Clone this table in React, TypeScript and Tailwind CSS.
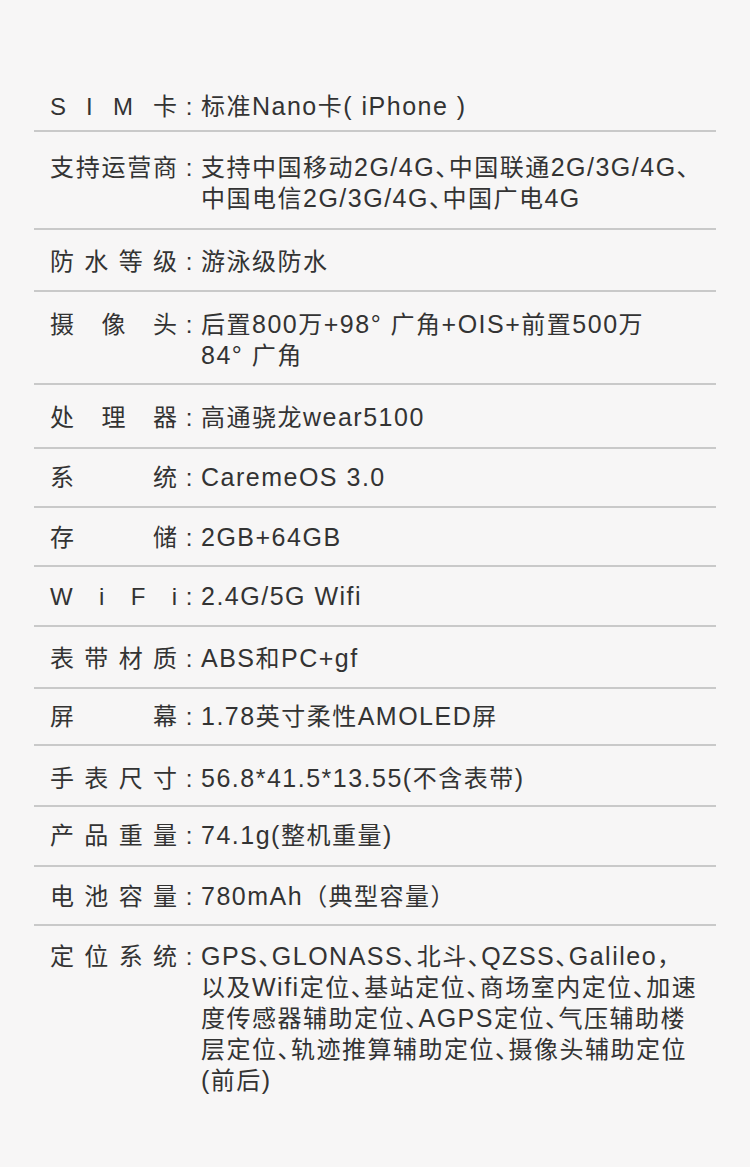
import React from 'react';

interface SpecRow {
  label: string;
  lines: string[];
  pad: string;
  halt?: boolean;
}

const specs: SpecRow[] = [
  { label: 'SIM卡', lines: ['标准Nano卡( iPhone )'], pad: 'pt-0 pb-[8px]' },
  {
    label: '支持运营商',
    lines: ['支持中国移动2G/4G、中国联通2G/3G/4G、', '中国电信2G/3G/4G、中国广电4G'],
    pad: 'pt-[20px] pb-[14px]',
    halt: true,
  },
  { label: '防水等级', lines: ['游泳级防水'], pad: 'pt-[16px] pb-[13px]' },
  { label: '摄像头', lines: ['后置800万+98° 广角+OIS+前置500万', '84° 广角'], pad: 'pt-[17px] pb-[12px]' },
  { label: '处理器', lines: ['高通骁龙wear5100'], pad: 'pt-[17px] pb-[14px]' },
  { label: '系统', lines: ['CaremeOS 3.0'], pad: 'pt-[13px] pb-[13px]' },
  { label: '存储', lines: ['2GB+64GB'], pad: 'pt-[14px] pb-[12px]' },
  { label: 'WiFi', lines: ['2.4G/5G Wifi'], pad: 'pt-[14px] pb-[13px]' },
  { label: '表带材质', lines: ['ABS和PC+gf'], pad: 'pt-[16px] pb-[13px]' },
  { label: '屏幕', lines: ['1.78英寸柔性AMOLED屏'], pad: 'pt-[12px] pb-[12px]' },
  { label: '手表尺寸', lines: ['56.8*41.5*13.55(不含表带)'], pad: 'pt-[17px] pb-[11px]' },
  { label: '产品重量', lines: ['74.1g(整机重量)'], pad: 'pt-[13px] pb-[14px]' },
  { label: '电池容量', lines: ['780mAh（典型容量）'], pad: 'pt-[14px] pb-[12px]' },
  {
    label: '定位系统',
    lines: [
      'GPS、GLONASS、北斗、QZSS、Galileo，',
      '以及Wifi定位、基站定位、商场室内定位、加速',
      '度传感器辅助定位、AGPS定位、气压辅助楼',
      '层定位、轨迹推算辅助定位、摄像头辅助定位',
      '(前后)',
    ],
    pad: 'pt-[15px] pb-[20px]',
    halt: true,
  },
];

// latin runs are set a touch larger than the chinese ones
const Line = ({ text }: { text: string }) => {
  const parts = text.split(/([\u3000-\u303f\u4e00-\u9fff\uff00-\uffef]+)/).filter(Boolean);
  return (
    <div>
      {parts.map((p, i) =>
        /[\u3000-\u303f\u4e00-\u9fff\uff00-\uffef]/.test(p) ? (
          <span key={i}>{p}</span>
        ) : (
          <span key={i} className="text-[25px] leading-[31px]">
            {p}
          </span>
        )
      )}
    </div>
  );
};

const Label = ({ text }: { text: string }) => (
  <div className="flex w-[127px] shrink-0 justify-between">
    {text.split('').map((ch, i) => (
      <span key={i}>{ch}</span>
    ))}
  </div>
);

export default function App() {
  return (
    <div
      className="min-h-[1167px] w-[750px] bg-[#f7f6f6] pt-[91px] text-[24px] leading-[31px] text-[#333333]"
      style={{ fontFamily: '"Liberation Sans", "Noto Sans CJK SC", sans-serif' }}
    >
      <div className="mx-[34px]">
        {specs.map((row, idx) => (
          <div
            key={row.label}
            className={`flex pl-[16px] ${row.pad} ${idx < specs.length - 1 ? 'border-b-2 border-[#c9c9c9]' : ''}`}
          >
            <Label text={row.label} />
            <span className="w-[24px] shrink-0 text-center">:</span>
            <div
              className={`whitespace-nowrap tracking-[1.5px] ${row.halt ? "[font-feature-settings:'halt']" : ''}`}
            >
              {row.lines.map((line, i) => (
                <Line key={i} text={line} />
              ))}
            </div>
          </div>
        ))}
      </div>
    </div>
  );
}
